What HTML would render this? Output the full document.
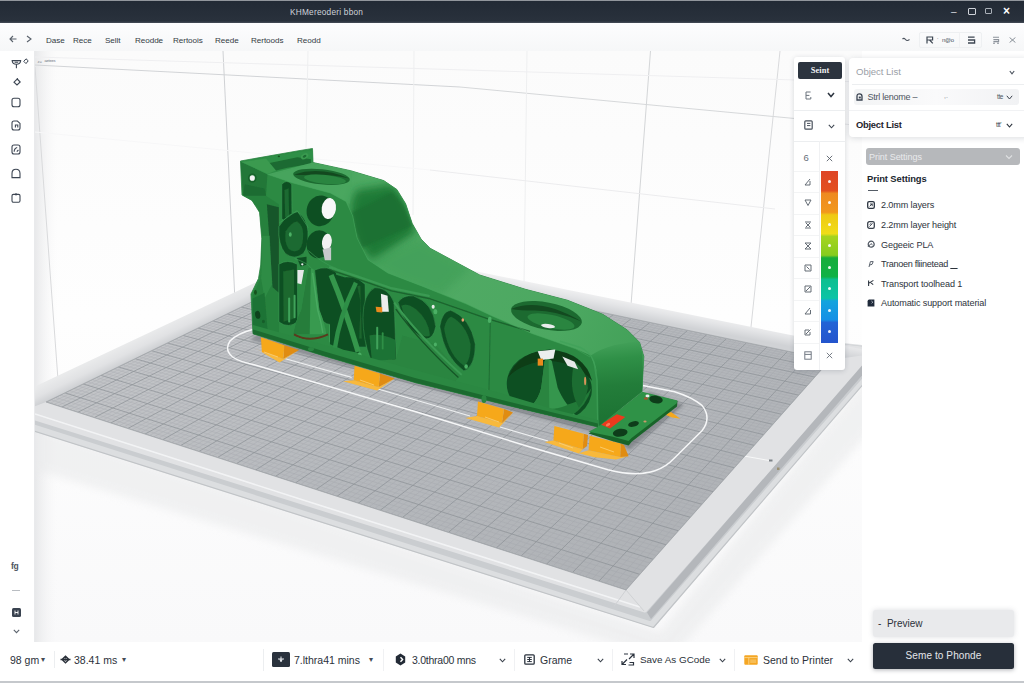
<!DOCTYPE html>
<html lang="en">
<head>
<meta charset="utf-8">
<title>Slicer</title>
<style>
*{box-sizing:border-box;margin:0;padding:0}
html,body{width:1024px;height:683px;overflow:hidden;background:#fff;font-family:"Liberation Sans",sans-serif;color:#2b313a}
.abs{position:absolute}
#title{left:0;top:0;width:1024px;height:23px;background:linear-gradient(#c9ccd0 0,#222a35 1.5px,#262e39 12px,#29313c 21px,#48505b 23px)}
#title .t{left:290px;top:7px;font-size:8.3px;color:#cfd3d9;letter-spacing:.22px;white-space:nowrap}
#title .w{top:6px;font-size:10px;color:#d5d9df}
#menu{left:0;top:23px;width:1024px;height:28px;background:linear-gradient(#fdfdfe,#f6f7f8);box-shadow:0 1px 3px rgba(0,0,0,.10)}
#menu span{position:absolute;top:12.5px;font-size:8.1px;color:#343b44;white-space:nowrap;letter-spacing:-.05px}
#left{left:0;top:51px;width:35px;height:591px;background:#fff;border-right:1px solid #e9eaec}
#view{left:35px;top:51px;width:827px;height:590.5px;overflow:hidden;background:#fdfdfd}
#view svg{position:absolute;left:-35px;top:-51px}
#right{left:862px;top:51px;width:162px;height:591px;background:#fff}
#bottom{left:0;top:641.5px;width:1024px;height:41.5px;background:#fff;border-bottom:2px solid #c5c8cc}
#bottom span{position:absolute;top:12px;font-size:10.5px;color:#2b313a;white-space:nowrap}
#bottom i{position:absolute;top:12px;font-size:8px;font-style:normal;color:#444b55}
.card{background:#fff;box-shadow:0 1px 5px rgba(40,50,60,.16);border-radius:3px}
</style>
</head>
<body>
<!-- title bar -->
<div id="title" class="abs">
  <div class="abs t">KHMereoderi bbon</div>
  <div class="abs w" style="left:951px">–</div>
  <div class="abs w" style="left:968px;top:8px;width:8px;height:7px;border:1px solid #cfd3d9;border-radius:1px"></div>
  <div class="abs w" style="left:985px;top:8px;width:7px;height:6px;border:1px solid #aab0b8;border-radius:1px"></div>
  <div class="abs w" style="left:1003px;top:4px;font-size:12px;font-weight:bold;color:#fff">×</div>
</div>
<!-- menu bar -->
<div id="menu" class="abs">
  <svg class="abs" style="left:9px;top:12px" width="8" height="8" viewBox="0 0 8 8"><path d="M7.5 4H1M4 1 1 4l3 3" fill="none" stroke="#59616b" stroke-width="1.1"/></svg>
  <svg class="abs" style="left:26px;top:12px" width="6" height="8" viewBox="0 0 6 8"><path d="M1 1 5 4 1 7" fill="none" stroke="#59616b" stroke-width="1.1"/></svg>
  <span style="left:46px">Dase</span>
  <span style="left:73px">Rece</span>
  <span style="left:105px">Sellt</span>
  <span style="left:135px">Reodde</span>
  <span style="left:173px">Rertoois</span>
  <span style="left:215px">Reede</span>
  <span style="left:251px">Rertoods</span>
  <span style="left:297px">Reodd</span>
  <svg class="abs" style="left:902px;top:14px" width="8" height="5" viewBox="0 0 8 5"><path d="M.5 2Q2 .5 3.5 2.5T7.5 2.5" fill="none" stroke="#4a525d" stroke-width="1.1"/></svg>
  <div class="abs" style="left:919px;top:8.5px;width:63px;height:16px;border:1px solid #eef0f2;border-radius:2px"></div>
  <div class="abs" style="left:959px;top:9px;width:1px;height:15px;background:#f0f1f3"></div>
  <svg class="abs" style="left:925.5px;top:13px" width="8" height="8" viewBox="0 0 8 8"><path d="M1 7.5V1h5.6v3H1M3.6 4 6.8 7.4" fill="none" stroke="#3d4652" stroke-width="1.2"/></svg>
  <span style="left:936.5px;top:12px;font-size:7px;color:#9aa0a8">·</span>
  <span style="left:942px;top:14px;font-size:6px;color:#4a525d;letter-spacing:-.3px">n@o</span>
  <svg class="abs" style="left:966.5px;top:13px" width="9" height="8" viewBox="0 0 9 8"><path d="M1 1.2h6.6M1 4h6.6v3H1.6M1 7h2" fill="none" stroke="#3d4652" stroke-width="1.3"/></svg>
  <svg class="abs" style="left:991.5px;top:13px" width="8" height="8" viewBox="0 0 8 8"><path d="M1 1.2h6M1.4 3.6h5.2v2H1.4M1 7.2h2M5 7.2h2" fill="none" stroke="#8c929b" stroke-width="1.1"/></svg>
  <svg class="abs" style="left:1008.5px;top:14px" width="7" height="6" viewBox="0 0 7 6"><path d="M.6 .5 6.4 5.5M6.4 .5 .6 5.5" fill="none" stroke="#7d848d" stroke-width=".9"/></svg>
</div>
<!-- left toolbar -->
<div id="left" class="abs">
<style>#left svg{position:absolute;fill:none;stroke:#3c4552;stroke-width:1.1}</style>
<svg style="left:10.5px;top:6.5px" width="18" height="12" viewBox="0 0 18 12"><path d="M.6 2.6h9.6M1.2 2.8Q1.4 6.2 5.4 6.2 9.4 6.2 9.6 2.8M3.6 4.2h3.6M5.4 6.2v4"/><path d="M15 .8 17.2 2.8 15 5.6 12.8 3.4Z" stroke-width="1"/></svg>
<svg style="left:12.5px;top:26.5px" width="8" height="8" viewBox="0 0 8 8"><path d="M4.2 1 7.2 4 4 7 1 4.2Z"/><path d="M4.6 .2 4.2 1.2"/></svg>
<svg style="left:11.3px;top:46px" width="10" height="11" viewBox="0 0 10 11"><rect x="1" y="1.2" width="8" height="8.6" rx="2"/></svg>
<svg style="left:11px;top:69px" width="10" height="11" viewBox="0 0 10 11"><path d="M1 3Q1 1 3 1H6.4L9 3.4V8Q9 10 7 10H3Q1 10 1 8Z"/><path d="M4.4 7.6V5h2.4v2.6"/></svg>
<svg style="left:11px;top:93px" width="10" height="11" viewBox="0 0 10 11"><path d="M1 3Q1 1 3 1H7Q9 1 9 3V8Q9 10 7 10H3Q1 10 1 8Z"/><path d="M3.2 7.8Q3 4.4 6.2 3.4M5.8 7.6 7.4 6"/></svg>
<svg style="left:11px;top:117px" width="10" height="11" viewBox="0 0 10 11"><path d="M1 9.6V5.4Q1 1.2 5 1.2 9 1.2 9 5.4V9.6Z"/></svg>
<svg style="left:11px;top:142px" width="10" height="10" viewBox="0 0 10 10"><rect x="1" y="1.4" width="8" height="7.8" rx="1.4"/><path d="M4 1.4h2" stroke-width="1.6"/></svg>
<div class="abs" style="left:11px;top:510px;font-size:8.5px;font-weight:bold;color:#4d555f;letter-spacing:-.4px">fg</div>
<div class="abs" style="left:12px;top:538.5px;width:8px;height:1px;background:#b9bdc2"></div>
<div class="abs" style="left:11.5px;top:556.5px;width:9px;height:9px;background:#3a4350;border-radius:1.5px"></div>
<svg style="left:13.5px;top:558.5px;stroke:#fff;stroke-width:.9" width="5" height="5" viewBox="0 0 5 5"><path d="M1 .5v4M4 .5v4M1 2.5h3"/></svg>
<svg style="left:12.5px;top:578px" width="7" height="5" viewBox="0 0 7 5"><path d="M.8 .8 3.5 3.6 6.2 .8" stroke="#5c646e"/></svg>

</div>
<!-- 3d viewport -->
<div id="view" class="abs">
<svg width="1024" height="683" viewBox="0 0 1024 683">
<defs>
<linearGradient id="bg" x1="0" y1="0" x2="0" y2="1"><stop offset="0" stop-color="#fbfbfb"/><stop offset=".45" stop-color="#fefefe"/><stop offset="1" stop-color="#f9f9fa"/></linearGradient>
<linearGradient id="bgl" x1="0" y1="0" x2="1" y2="0"><stop offset="0" stop-color="#e3e4e6" stop-opacity=".8"/><stop offset="1" stop-color="#f4f4f5" stop-opacity="0"/></linearGradient>
<linearGradient id="grid" gradientUnits="userSpaceOnUse" x1="340" y1="260" x2="500" y2="600"><stop offset="0" stop-color="#c3c5c8"/><stop offset=".5" stop-color="#b6b9bd"/><stop offset="1" stop-color="#b0b3b7"/></linearGradient>
<linearGradient id="top" gradientUnits="userSpaceOnUse" x1="300" y1="170" x2="640" y2="340"><stop offset="0" stop-color="#46a35c"/><stop offset=".2" stop-color="#4fab64"/><stop offset=".45" stop-color="#50aa64"/><stop offset=".8" stop-color="#4ca861"/><stop offset="1" stop-color="#43a159"/></linearGradient>
<linearGradient id="front" gradientUnits="userSpaceOnUse" x1="250" y1="200" x2="600" y2="420"><stop offset="0" stop-color="#237a3a"/><stop offset="1" stop-color="#2a8641"/></linearGradient>
<filter id="b05" x="-5%" y="-5%" width="110%" height="110%"><feGaussianBlur stdDeviation="0.45"/></filter>
<filter id="b1" x="-10%" y="-10%" width="120%" height="120%"><feGaussianBlur stdDeviation="0.7"/></filter>
<filter id="b2" x="-20%" y="-20%" width="140%" height="140%"><feGaussianBlur stdDeviation="1.6"/></filter>
<filter id="b4" x="-20%" y="-20%" width="140%" height="140%"><feGaussianBlur stdDeviation="4"/></filter>
<clipPath id="gridclip"><polygon points="46,402 342,258 830,360 626,590"/></clipPath>
</defs>
<rect x="35" y="51" width="827" height="592" fill="url(#bg)"/>
<rect x="35" y="51" width="22" height="592" fill="url(#bgl)"/>
<text x="37.5" y="62.5" font-family="Liberation Sans, sans-serif" font-size="4.2" fill="#8a9099">z=</text><text x="44.5" y="62.3" font-family="Liberation Sans, sans-serif" font-size="4" fill="#6a717b" letter-spacing="-.2">aetees</text>
<line x1="35" y1="65" x2="460" y2="87" stroke="#d2d4d7" stroke-width="1"/>
<line x1="460" y1="87" x2="800" y2="119" stroke="#d6d8da" stroke-width="1"/>
<line x1="800" y1="119" x2="862" y2="126" stroke="#e6e7e9" stroke-width="1"/>
<line x1="223" y1="51" x2="236" y2="322" stroke="#cfd1d4" stroke-width="1"/>
<line x1="35" y1="67" x2="60" y2="407" stroke="#d9dadc" stroke-width="1"/>
<line x1="650.5" y1="51" x2="630" y2="318" stroke="#d4d6d8" stroke-width="1"/>
<line x1="780" y1="51" x2="751" y2="327" stroke="#d9dadc" stroke-width="1"/>
<line x1="308" y1="51" x2="306" y2="150" stroke="#eeeff0" stroke-width="1"/>
<line x1="414" y1="51" x2="413" y2="215" stroke="#eeeff0" stroke-width="1"/>
<line x1="527" y1="51" x2="524" y2="285" stroke="#eeeff0" stroke-width="1"/>
<line x1="35" y1="132" x2="430" y2="170" stroke="#f7f7f8" stroke-width="1"/>
<line x1="430" y1="170" x2="775" y2="209" stroke="#ececee" stroke-width="1"/>
<line x1="35" y1="57" x2="862" y2="82" stroke="#efeff1" stroke-width="1"/>
<polygon points="35,424 660,632 880,360 880,420 670,660 35,470" fill="#e9eaeb" opacity=".6" filter="url(#b4)"/>
<polygon points="20,425 653,625.5 890,350 700,330 340,262 20,400" fill="#dcdee0" stroke="#dcdee0" stroke-width="4" stroke-linejoin="round"/>
<polyline points="20,426.5 653.5,627.5 891,352" fill="none" stroke="#c1c4c7" stroke-width="1.2" stroke-linejoin="round"/>
<polygon points="20,418.5 650,619.5 885,350 700,330 340,262 20,400" fill="#cacdd0" stroke="#cacdd0" stroke-width="3" stroke-linejoin="round"/>
<polygon points="20,413.6 645,610.5 874,350 700,330 342,260 20,400" fill="#e1e2e4" stroke="#e1e2e4" stroke-width="4" stroke-linejoin="round"/>
<polygon points="647,612.5 875.5,350 884,350 651,619" fill="#b4b7bb"/>
<linearGradient id="bk1" gradientUnits="userSpaceOnUse" x1="143" y1="336" x2="150.5" y2="351.5"><stop offset="0" stop-color="#e9eaeb"/><stop offset=".5" stop-color="#e1e2e4"/><stop offset="1" stop-color="#cdcfd2"/></linearGradient>
<linearGradient id="bk2" gradientUnits="userSpaceOnUse" x1="603" y1="295" x2="600" y2="311"><stop offset="0" stop-color="#f1f1f2"/><stop offset=".45" stop-color="#e4e5e7"/><stop offset="1" stop-color="#d0d2d5"/></linearGradient>
<polygon points="46,402 342,258 337,244 20,393.5 20,412" fill="url(#bk1)"/>
<polygon points="342,258 830,360 880,353 336,243" fill="url(#bk2)"/>
<polyline points="35,414 300,499 640,607" fill="none" stroke="#f4f5f6" stroke-width="1.6" opacity=".9"/>
<line x1="626" y1="590" x2="644" y2="611" stroke="#d0d2d4" stroke-width="1"/>
<line x1="626" y1="590" x2="614" y2="606.5" stroke="#cfd1d4" stroke-width="1"/>
<line x1="744" y1="456" x2="769" y2="460.5" stroke="#f7f8f8" stroke-width="1"/>
<rect x="769" y="459.5" width="3.5" height="2" fill="#7d8287"/><rect x="777" y="467.5" width="2.5" height="2.5" fill="#9a8f70"/>
<polygon points="46,402 342,258 830,360 626,590" fill="url(#grid)"/>
<g clip-path="url(#gridclip)" stroke="#8c9096" stroke-width=".8" opacity=".9" fill="none"><line x1="46.0" y1="402.0" x2="342.0" y2="258.0"/><line x1="61.8" y1="407.1" x2="356.2" y2="261.0"/><line x1="77.8" y1="412.3" x2="370.6" y2="264.0"/><line x1="94.2" y1="417.6" x2="385.2" y2="267.0"/><line x1="110.8" y1="423.0" x2="400.1" y2="270.1"/><line x1="127.8" y1="428.5" x2="415.1" y2="273.3"/><line x1="145.0" y1="434.1" x2="430.3" y2="276.5"/><line x1="162.6" y1="439.8" x2="445.8" y2="279.7"/><line x1="180.5" y1="445.6" x2="461.5" y2="283.0"/><line x1="198.8" y1="451.5" x2="477.4" y2="286.3"/><line x1="217.4" y1="457.6" x2="493.5" y2="289.7"/><line x1="236.4" y1="463.7" x2="509.9" y2="293.1"/><line x1="255.7" y1="470.0" x2="526.5" y2="296.6"/><line x1="275.4" y1="476.4" x2="543.3" y2="300.1"/><line x1="295.5" y1="482.9" x2="560.4" y2="303.7"/><line x1="316.0" y1="489.5" x2="577.8" y2="307.3"/><line x1="337.0" y1="496.3" x2="595.4" y2="311.0"/><line x1="358.3" y1="503.2" x2="613.3" y2="314.7"/><line x1="380.2" y1="510.3" x2="631.5" y2="318.5"/><line x1="402.4" y1="517.5" x2="650.0" y2="322.4"/><line x1="425.2" y1="524.9" x2="668.7" y2="326.3"/><line x1="448.4" y1="532.4" x2="687.8" y2="330.3"/><line x1="472.1" y1="540.1" x2="707.1" y2="334.3"/><line x1="496.3" y1="548.0" x2="726.8" y2="338.4"/><line x1="521.1" y1="556.0" x2="746.7" y2="342.6"/><line x1="546.5" y1="564.2" x2="767.1" y2="346.8"/><line x1="572.4" y1="572.6" x2="787.7" y2="351.2"/><line x1="598.9" y1="581.2" x2="808.7" y2="355.5"/><line x1="626.0" y1="590.0" x2="830.0" y2="360.0"/><line x1="46.0" y1="402.0" x2="626.0" y2="590.0"/><line x1="64.8" y1="392.8" x2="639.9" y2="574.4"/><line x1="83.1" y1="383.9" x2="653.2" y2="559.3"/><line x1="100.9" y1="375.3" x2="666.1" y2="544.8"/><line x1="118.2" y1="366.9" x2="678.5" y2="530.8"/><line x1="135.1" y1="358.7" x2="690.4" y2="517.3"/><line x1="151.4" y1="350.7" x2="702.0" y2="504.3"/><line x1="167.4" y1="343.0" x2="713.2" y2="491.7"/><line x1="182.9" y1="335.4" x2="723.9" y2="479.6"/><line x1="198.0" y1="328.0" x2="734.4" y2="467.8"/><line x1="212.8" y1="320.9" x2="744.5" y2="456.4"/><line x1="227.2" y1="313.9" x2="754.3" y2="445.4"/><line x1="241.2" y1="307.0" x2="763.7" y2="434.7"/><line x1="254.9" y1="300.4" x2="772.9" y2="424.4"/><line x1="268.2" y1="293.9" x2="781.8" y2="414.3"/><line x1="281.3" y1="287.6" x2="790.4" y2="404.6"/><line x1="294.0" y1="281.4" x2="798.8" y2="395.2"/><line x1="306.4" y1="275.3" x2="806.9" y2="386.0"/><line x1="318.5" y1="269.4" x2="814.9" y2="377.1"/><line x1="330.4" y1="263.6" x2="822.5" y2="368.4"/><line x1="342.0" y1="258.0" x2="830.0" y2="360.0"/></g>
<g clip-path="url(#gridclip)" stroke="#9ea2a8" stroke-width=".45" opacity=".65" fill="none"><line x1="49.9" y1="403.3" x2="345.5" y2="258.7"/><line x1="53.9" y1="404.5" x2="349.1" y2="259.5"/><line x1="57.8" y1="405.8" x2="352.6" y2="260.2"/><line x1="65.8" y1="408.4" x2="359.8" y2="261.7"/><line x1="69.8" y1="409.7" x2="363.4" y2="262.5"/><line x1="73.8" y1="411.0" x2="367.0" y2="263.2"/><line x1="81.9" y1="413.6" x2="374.3" y2="264.7"/><line x1="86.0" y1="415.0" x2="377.9" y2="265.5"/><line x1="90.1" y1="416.3" x2="381.6" y2="266.3"/><line x1="98.3" y1="419.0" x2="388.9" y2="267.8"/><line x1="102.5" y1="420.3" x2="392.6" y2="268.6"/><line x1="106.6" y1="421.7" x2="396.3" y2="269.4"/><line x1="115.0" y1="424.4" x2="403.8" y2="270.9"/><line x1="119.3" y1="425.7" x2="407.5" y2="271.7"/><line x1="123.5" y1="427.1" x2="411.3" y2="272.5"/><line x1="132.1" y1="429.9" x2="418.9" y2="274.1"/><line x1="136.4" y1="431.3" x2="422.7" y2="274.9"/><line x1="140.7" y1="432.7" x2="426.5" y2="275.7"/><line x1="149.4" y1="435.5" x2="434.2" y2="277.3"/><line x1="153.8" y1="436.9" x2="438.0" y2="278.1"/><line x1="158.2" y1="438.4" x2="441.9" y2="278.9"/><line x1="167.1" y1="441.2" x2="449.7" y2="280.5"/><line x1="171.5" y1="442.7" x2="453.6" y2="281.3"/><line x1="176.0" y1="444.1" x2="457.5" y2="282.1"/><line x1="185.1" y1="447.1" x2="465.4" y2="283.8"/><line x1="189.6" y1="448.6" x2="469.4" y2="284.6"/><line x1="194.2" y1="450.0" x2="473.4" y2="285.5"/><line x1="203.4" y1="453.0" x2="481.4" y2="287.1"/><line x1="208.1" y1="454.5" x2="485.4" y2="288.0"/><line x1="212.7" y1="456.0" x2="489.4" y2="288.8"/><line x1="222.1" y1="459.1" x2="497.6" y2="290.5"/><line x1="226.8" y1="460.6" x2="501.6" y2="291.4"/><line x1="231.6" y1="462.2" x2="505.7" y2="292.2"/><line x1="241.2" y1="465.3" x2="514.0" y2="293.9"/><line x1="246.0" y1="466.8" x2="518.1" y2="294.8"/><line x1="250.8" y1="468.4" x2="522.3" y2="295.7"/><line x1="260.6" y1="471.6" x2="530.7" y2="297.4"/><line x1="265.5" y1="473.2" x2="534.9" y2="298.3"/><line x1="270.5" y1="474.8" x2="539.1" y2="299.2"/><line x1="280.4" y1="478.0" x2="547.6" y2="301.0"/><line x1="285.4" y1="479.6" x2="551.8" y2="301.9"/><line x1="290.5" y1="481.2" x2="556.1" y2="302.8"/><line x1="300.6" y1="484.5" x2="564.7" y2="304.6"/><line x1="305.7" y1="486.2" x2="569.1" y2="305.5"/><line x1="310.9" y1="487.9" x2="573.4" y2="306.4"/><line x1="321.2" y1="491.2" x2="582.2" y2="308.2"/><line x1="326.5" y1="492.9" x2="586.6" y2="309.1"/><line x1="331.7" y1="494.6" x2="591.0" y2="310.0"/><line x1="342.3" y1="498.0" x2="599.9" y2="311.9"/><line x1="347.6" y1="499.8" x2="604.3" y2="312.8"/><line x1="353.0" y1="501.5" x2="608.8" y2="313.8"/><line x1="363.8" y1="505.0" x2="617.8" y2="315.7"/><line x1="369.2" y1="506.8" x2="622.4" y2="316.6"/><line x1="374.7" y1="508.5" x2="626.9" y2="317.6"/><line x1="385.7" y1="512.1" x2="636.1" y2="319.5"/><line x1="391.2" y1="513.9" x2="640.7" y2="320.4"/><line x1="396.8" y1="515.7" x2="645.3" y2="321.4"/><line x1="408.1" y1="519.4" x2="654.6" y2="323.3"/><line x1="413.7" y1="521.2" x2="659.3" y2="324.3"/><line x1="419.4" y1="523.0" x2="664.0" y2="325.3"/><line x1="430.9" y1="526.8" x2="673.4" y2="327.3"/><line x1="436.7" y1="528.6" x2="678.2" y2="328.3"/><line x1="442.5" y1="530.5" x2="683.0" y2="329.3"/><line x1="454.3" y1="534.3" x2="692.6" y2="331.3"/><line x1="460.2" y1="536.2" x2="697.4" y2="332.3"/><line x1="466.1" y1="538.2" x2="702.2" y2="333.3"/><line x1="478.1" y1="542.1" x2="712.0" y2="335.3"/><line x1="484.2" y1="544.0" x2="716.9" y2="336.4"/><line x1="490.2" y1="546.0" x2="721.8" y2="337.4"/><line x1="502.5" y1="550.0" x2="731.7" y2="339.5"/><line x1="508.7" y1="552.0" x2="736.7" y2="340.5"/><line x1="514.9" y1="554.0" x2="741.7" y2="341.5"/><line x1="527.4" y1="558.0" x2="751.8" y2="343.7"/><line x1="533.7" y1="560.1" x2="756.9" y2="344.7"/><line x1="540.1" y1="562.1" x2="761.9" y2="345.8"/><line x1="552.9" y1="566.3" x2="772.2" y2="347.9"/><line x1="559.3" y1="568.4" x2="777.3" y2="349.0"/><line x1="565.8" y1="570.5" x2="782.5" y2="350.1"/><line x1="578.9" y1="574.7" x2="792.9" y2="352.2"/><line x1="585.6" y1="576.9" x2="798.1" y2="353.3"/><line x1="592.2" y1="579.0" x2="803.4" y2="354.4"/><line x1="605.6" y1="583.4" x2="814.0" y2="356.6"/><line x1="612.4" y1="585.6" x2="819.3" y2="357.8"/><line x1="619.2" y1="587.8" x2="824.6" y2="358.9"/><line x1="50.8" y1="399.7" x2="629.5" y2="586.0"/><line x1="55.5" y1="397.4" x2="633.0" y2="582.1"/><line x1="60.2" y1="395.1" x2="636.4" y2="578.2"/><line x1="69.5" y1="390.6" x2="643.2" y2="570.6"/><line x1="74.0" y1="388.4" x2="646.6" y2="566.8"/><line x1="78.6" y1="386.1" x2="649.9" y2="563.0"/><line x1="87.6" y1="381.8" x2="656.5" y2="555.6"/><line x1="92.1" y1="379.6" x2="659.7" y2="552.0"/><line x1="96.5" y1="377.4" x2="662.9" y2="548.4"/><line x1="105.3" y1="373.2" x2="669.2" y2="541.3"/><line x1="109.6" y1="371.0" x2="672.3" y2="537.8"/><line x1="113.9" y1="368.9" x2="675.4" y2="534.3"/><line x1="122.5" y1="364.8" x2="681.5" y2="527.4"/><line x1="126.7" y1="362.7" x2="684.5" y2="524.0"/><line x1="130.9" y1="360.7" x2="687.5" y2="520.7"/><line x1="139.2" y1="356.7" x2="693.4" y2="514.0"/><line x1="143.3" y1="354.7" x2="696.3" y2="510.8"/><line x1="147.4" y1="352.7" x2="699.1" y2="507.5"/><line x1="155.5" y1="348.8" x2="704.8" y2="501.1"/><line x1="159.5" y1="346.8" x2="707.6" y2="498.0"/><line x1="163.4" y1="344.9" x2="710.4" y2="494.8"/><line x1="171.3" y1="341.0" x2="715.9" y2="488.7"/><line x1="175.2" y1="339.1" x2="718.6" y2="485.6"/><line x1="179.1" y1="337.3" x2="721.3" y2="482.6"/><line x1="186.7" y1="333.5" x2="726.6" y2="476.6"/><line x1="190.5" y1="331.7" x2="729.2" y2="473.6"/><line x1="194.3" y1="329.9" x2="731.8" y2="470.7"/><line x1="201.8" y1="326.2" x2="736.9" y2="464.9"/><line x1="205.5" y1="324.4" x2="739.5" y2="462.1"/><line x1="209.1" y1="322.6" x2="742.0" y2="459.2"/><line x1="216.4" y1="319.1" x2="746.9" y2="453.6"/><line x1="220.0" y1="317.3" x2="749.4" y2="450.9"/><line x1="223.6" y1="315.6" x2="751.8" y2="448.1"/><line x1="230.7" y1="312.1" x2="756.6" y2="442.7"/><line x1="234.2" y1="310.4" x2="759.0" y2="440.0"/><line x1="237.7" y1="308.7" x2="761.4" y2="437.4"/><line x1="244.6" y1="305.4" x2="766.0" y2="432.1"/><line x1="248.1" y1="303.7" x2="768.3" y2="429.5"/><line x1="251.5" y1="302.0" x2="770.6" y2="426.9"/><line x1="258.2" y1="298.7" x2="775.1" y2="421.8"/><line x1="261.6" y1="297.1" x2="777.4" y2="419.3"/><line x1="264.9" y1="295.5" x2="779.6" y2="416.8"/><line x1="271.5" y1="292.3" x2="784.0" y2="411.9"/><line x1="274.8" y1="290.7" x2="786.1" y2="409.4"/><line x1="278.0" y1="289.1" x2="788.3" y2="407.0"/><line x1="284.5" y1="286.0" x2="792.6" y2="402.2"/><line x1="287.7" y1="284.4" x2="794.7" y2="399.9"/><line x1="290.8" y1="282.9" x2="796.7" y2="397.5"/><line x1="297.1" y1="279.8" x2="800.9" y2="392.8"/><line x1="300.2" y1="278.3" x2="802.9" y2="390.5"/><line x1="303.3" y1="276.8" x2="804.9" y2="388.3"/><line x1="309.5" y1="273.8" x2="808.9" y2="383.7"/><line x1="312.5" y1="272.3" x2="810.9" y2="381.5"/><line x1="315.5" y1="270.9" x2="812.9" y2="379.3"/><line x1="321.5" y1="268.0" x2="816.8" y2="374.9"/><line x1="324.5" y1="266.5" x2="818.7" y2="372.7"/><line x1="327.5" y1="265.1" x2="820.6" y2="370.6"/><line x1="333.3" y1="262.2" x2="824.4" y2="366.3"/><line x1="336.2" y1="260.8" x2="826.3" y2="364.2"/><line x1="339.1" y1="259.4" x2="828.2" y2="362.1"/></g>
<polygon points="46,402 342,258 830,360 626,590" fill="none" stroke="#a6a9ad" stroke-width=".8"/>
<path d="M253,329.5 Q238,333 230,341 Q224,350 232.6,357 Q240,362 254,364.7 L415,411.5 L530,447 L608,469.8 Q636,477 655,470.8 Q666,467 674.5,458 L702,430.8 Q712,418 702,405.4 Q692,397 674.5,391.7 L643,385.5" fill="none" stroke="#f6f7f8" stroke-width="1.5" stroke-linejoin="round"/>
<path d="M285.3,358.8 L351.7,377.4 M378,389 L470,416 M500,427 L548,441" fill="none" stroke="#eef0f1" stroke-width="1.1"/>
<polygon points="250,340 600,434 630,450 684,405 650,392 600,420 262,330" fill="#60656a" opacity=".5" filter="url(#b2)"/>
<polygon points="249.2,344.8 261.9,352 283.4,358.8 299,350 279.5,362.6" fill="#f8b93c" />
<polygon points="284.3,345.2 299,350 283.4,358.8" fill="#e08c12" />
<polygon points="260.9,337.3 284.3,345.2 283.4,358.8 261.9,352" fill="#f6a81a" />
<polygon points="343,381.3 353.7,380.3 378.7,387.1 394.7,378.4 377.1,390.4" fill="#f8b93c" />
<polygon points="380,373.5 394.7,378.4 378.7,387.1" fill="#e08c12" />
<polygon points="354.6,365.7 380,373.5 378.7,387.1 353.7,380.3" fill="#f6a81a" />
<polygon points="465.5,418 477,416 502,423 513,413 499,427.5" fill="#f8b93c" />
<polygon points="504,409 513,412.5 502,423" fill="#e08c12" />
<polygon points="478,401.5 504,409 502,423 477,416" fill="#f6a81a" />
<polygon points="544.6,442.1 553.4,440.5 582.7,449.3 578.8,453.4" fill="#f8b93c" />
<polygon points="583.7,433.7 588,435 587,446 582.7,449.3" fill="#e08c12" />
<polygon points="554.4,425.9 583.7,433.7 582.7,449.3 553.4,440.5" fill="#f6a81a" />
<polygon points="578.8,453.2 588.6,450.3 620.2,457.1 628.6,456.2 616,459.4 594.5,457.3" fill="#f8b93c" />
<polygon points="620.8,443.5 624,445 628.6,456.2 620.2,457.1" fill="#e08c12" />
<polygon points="589.6,435.7 620.8,443.5 620.2,457.1 588.6,450.3" fill="#f6a81a" />
<polygon points="664.8,414.5 671,412 680.4,418.8 672,417.5" fill="#f4a81e" />
<line x1="264" y1="352" x2="278" y2="357" stroke="#fbd27a" stroke-width=".8"/>
<line x1="360" y1="380" x2="374" y2="385" stroke="#fbd27a" stroke-width=".8"/>
<line x1="485" y1="417" x2="499" y2="422" stroke="#fbd27a" stroke-width=".8"/>
<line x1="559" y1="443" x2="573" y2="448" stroke="#fbd27a" stroke-width=".8"/>
<line x1="600" y1="447" x2="614" y2="452" stroke="#fbd27a" stroke-width=".8"/>
<polygon points="588.6,433.5 597.4,428 642.3,392.5 677.5,401 677,406.5 632,441.5 628.6,445.5 612,441" fill="#186429" />
<polygon points="588.6,431.8 597.4,426.9 642.3,391.7 677.5,400.5 676.5,403.5 631.6,438 628.6,441 612,436.6" fill="#2f9247" />
<ellipse cx="656" cy="399.5" rx="6.8" ry="3.9" fill="#0e3d1a" transform="rotate(8 656 399.5)" />
<ellipse cx="633.5" cy="424" rx="5.5" ry="2.7" fill="#0e3d1a" transform="rotate(-14 633.5 424)" />
<ellipse cx="620.2" cy="432.7" rx="7.4" ry="3.9" fill="#0e3d1a" transform="rotate(-8 620.2 432.7)" />
<ellipse cx="647.5" cy="396" rx="2" ry="1.4" fill="#ecefef" transform="rotate(0 647.5 396)" />
<ellipse cx="646" cy="398.5" rx="2.2" ry="1.2" fill="#9a5a30" transform="rotate(0 646 398.5)" />
<ellipse cx="645" cy="421.5" rx="1.6" ry="1" fill="#c99a6a" transform="rotate(0 645 421.5)" />
<polygon points="600.7,424.5 616.9,414.2 625.3,417.1 610,428.4" fill="#ea3a1d" />
<ellipse cx="608" cy="424.6" rx="2.4" ry="1.4" fill="#f77a55" transform="rotate(-30 608 424.6)" />
<polygon points="240.5,161 300,150.5 312.5,148.5 313,162.5 350.7,170.7 383.7,180.6 396.8,189.4 405.6,203.7 412.2,223.4 421,239 430,248.2 479.7,275 525.4,289.3 567.6,300.3 602.7,314.3 627.3,330 639.6,342.4 643.8,356.5 642.5,380 642,391.5 622,407 597.9,427 500,403.5 415,382.5 324.4,356 253,333.8 251,294 258.5,278.5 260.7,265 261.8,238.8 259.6,212.4 252,200.4 242,195" fill="#2c8a43" stroke="#2a8340" stroke-width=".8" stroke-linejoin="round"/>
<clipPath id="silclip"><polygon points="240.5,161 300,150.5 312.5,148.5 313,162.5 350.7,170.7 383.7,180.6 396.8,189.4 405.6,203.7 412.2,223.4 421,239 430,248.2 479.7,275 525.4,289.3 567.6,300.3 602.7,314.3 627.3,330 639.6,342.4 643.8,356.5 642.5,380 642,391.5 622,407 597.9,427 500,403.5 415,382.5 324.4,356 253,333.8 251,294 258.5,278.5 260.7,265 261.8,238.8 259.6,212.4 252,200.4 242,195"/></clipPath>
<g clip-path="url(#silclip)" filter="url(#b05)"><g transform="translate(236 150) scale(0.285714)">
<polygon points="25,160 105,160 150,190 150,650 58,645 58,510 85,450 90,300 75,200" fill="#27813d" />
<polygon points="108,190 150,200 150,500 128,480 116,300" fill="#15572a" filter="url(#b2)"/>
<polygon points="92,300 118,300 126,470 100,520 88,450" fill="#329149" opacity=".7" filter="url(#b2)"/>
<polygon points="58,520 100,500 112,645 58,645" fill="#1f7335" filter="url(#b2)"/>
<ellipse cx="76" cy="577" rx="9" ry="14" fill="#0d421b" transform="rotate(-10 76 577)" />
<ellipse cx="68" cy="498" rx="5" ry="9" fill="#14531f" transform="rotate(0 68 498)" />
<ellipse cx="96" cy="600" rx="5" ry="6" fill="#175d29" transform="rotate(0 96 600)" />
<polygon points="15,40 110,85 105,160 25,160" fill="#227738" />
<polygon points="30,120 100,135 105,160 25,160" fill="#1b6a30" opacity=".8" filter="url(#b2)"/>
<ellipse cx="57" cy="98" rx="9" ry="10" fill="#f3f4f5" transform="rotate(0 57 98)" />
<ellipse cx="57" cy="98" rx="13" ry="14" fill="none" transform="rotate(0 57 98)" stroke="#185f2a" stroke-width="4"/>
<polygon points="15,40 215,8 270,3 270,45 110,85" fill="#2f8f46" />
<polygon points="105,48 215,25 262,32 262,48 180,62 140,72" fill="#1c6a30" />
<polygon points="20,42 105,30 140,72 110,84" fill="#3a9a50" />
<ellipse cx="240" cy="22" rx="14" ry="9" fill="#3a9a50" transform="rotate(-30 240 22)" />
<ellipse cx="240" cy="22" rx="7" ry="4" fill="#1c6a30" transform="rotate(-30 240 22)" />
<ellipse cx="150" cy="22" rx="4" ry="3" fill="#14561f" transform="rotate(0 150 22)" />
<path d="M160,120 Q178,100 195,120 L196,240 Q178,262 160,240 Z" fill="#115024"  stroke="#3d9f57" stroke-opacity=".55" stroke-width="3.5"/>
<path d="M170,140 L184,135 L186,235 L172,235Z" fill="#1b6a30" />
<path d="M150,268 Q180,222 215,216 Q250,240 252,285 Q254,340 236,362 Q205,388 172,362 Q146,330 150,268Z" fill="#115024"  stroke="#3d9f57" stroke-opacity=".55" stroke-width="3.5"/>
<path d="M174,284 Q195,252 214,250 Q234,264 235,292 Q236,332 222,348 Q200,362 184,346 Q168,322 174,284Z" fill="#1b6a30" />
<ellipse cx="190" cy="296" rx="5" ry="8" fill="#4bb065" transform="rotate(0 190 296)" />
<ellipse cx="295" cy="213" rx="48" ry="54" fill="#115024" transform="rotate(8 295 213)" />
<ellipse cx="325" cy="205" rx="25" ry="37" fill="#f7f8f8" transform="rotate(8 325 205)" />
<ellipse cx="290" cy="330" rx="43" ry="49" fill="#115024" transform="rotate(8 290 330)" />
<ellipse cx="318" cy="322" rx="17" ry="29" fill="#f1f2f2" transform="rotate(8 318 322)" />
<polygon points="303,348 333,340 333,386 311,386" fill="#c6c9cb" />
<polygon points="213,378 247,374 247,402 226,408" fill="#115024" />
<ellipse cx="232" cy="400" rx="4" ry="4" fill="#e9ecec" transform="rotate(0 232 400)" />
<path d="M150,400 Q180,380 215,400 L216,600 Q185,628 150,602 Z" fill="#115024"  stroke="#3d9f57" stroke-opacity=".55" stroke-width="3.5"/>
<polygon points="165,425 203,418 204,590 167,600" fill="#1b672e" />
<polygon points="215,420 238,420 229,470 215,466" fill="#e6e9e9" />
<path d="M275,420 Q320,400 352,430 L352,600 Q330,622 305,600 L290,560 Z" fill="#115024"  stroke="#3d9f57" stroke-opacity=".55" stroke-width="3.5"/>
<path d="M365,450 Q410,430 452,470 L456,690 L380,690 Q360,560 365,450 Z" fill="#115024"  stroke="#3d9f57" stroke-opacity=".55" stroke-width="3.5"/>
<polygon points="385,480 435,475 440,660 395,660" fill="#1a652d" />
<path d="M252,415 Q262,409 272,418 L292,560 Q312,610 316,645 L200,645 Q208,600 228,560 Z" fill="#379a50" />
<path d="M252,415 Q257,411 262,413 L258,645 L200,645 Q208,600 228,560 Z" fill="#257d3b" />
<path d="M268,430 L286,560 Q298,600 304,640" fill="none" stroke="#55b56d" stroke-width="5" opacity=".6"/>
<path d="M203,645 Q255,676 322,645" fill="none" stroke="#5a3a1e" stroke-width="7"/>
<line x1="186" y1="520" x2="186" y2="600" stroke="#3fa35a" stroke-width="7" stroke-linecap="round"/>
<line x1="205" y1="510" x2="205" y2="585" stroke="#3fa35a" stroke-width="7" stroke-linecap="round"/>
<line x1="330" y1="615" x2="330" y2="670" stroke="#3fa35a" stroke-width="7" stroke-linecap="round"/>
<line x1="352" y1="625" x2="352" y2="683" stroke="#3fa35a" stroke-width="7" stroke-linecap="round"/>
<path d="M152,255 L214,212 L253,272" fill="none" stroke="#3c9e56" stroke-width="3" opacity=".8"/>
<path d="M205,380 Q250,395 262,412" fill="none" stroke="#3c9e56" stroke-width="3" opacity=".8"/>
<path d="M253,352 Q300,395 352,415" fill="none" stroke="#3c9e56" stroke-width="3" opacity=".7"/>
</g></g>
<polygon points="267.4,174.3 313,162.5 350.7,170.7 383.7,180.6 396.8,189.4 405.6,203.7 412.2,223.4 421,239 430,248.2 479.7,275 525.4,289.3 567.6,300.3 602.7,314.3 627.3,330 639.6,342.4 643.8,356.5 643,372 642,391.5 597.9,427 596.9,372 590.7,355.6 575.6,348.8 531.7,333.4 492,315.9 465.9,303.8 423,286.5 387.8,273 368,259.8 357,237.8 352.7,215.9 346,201.5 330.3,193 293,183" fill="url(#top)" />
<clipPath id="topclip"><polygon points="267.4,174.3 313,162.5 350.7,170.7 383.7,180.6 396.8,189.4 405.6,203.7 412.2,223.4 421,239 430,248.2 479.7,275 525.4,289.3 567.6,300.3 602.7,314.3 627.3,330 639.6,342.4 643.8,356.5 643,372 642,391.5 597.9,427 596.9,372 590.7,355.6 575.6,348.8 531.7,333.4 492,315.9 465.9,303.8 423,286.5 387.8,273 368,259.8 357,237.8 352.7,215.9 346,201.5 330.3,193 293,183"/></clipPath>
<g clip-path="url(#topclip)">
<path d="M350,206 L356,190 L392,184 L402,196 L410,216 L416,232 L372,262 L360,246 L354,226 Z" fill="#1f7836" opacity=".95" filter="url(#b4)"/>
<path d="M352,212 L392,192 L404,206 L412,226 L362,248 L355,230 Z" fill="#1a6f31" opacity=".8" filter="url(#b2)"/>
<path d="M366,262 L420,238 L470,268 L440,296 L400,282 Z" fill="#3c9c55" opacity=".6" filter="url(#b4)"/>
<path d="M267,176 L313,164 L352,172 L350,204 L330,194 L293,184Z" fill="#48a65e" opacity=".5"/>
</g>
<linearGradient id="endf" gradientUnits="userSpaceOnUse" x1="615" y1="340" x2="622" y2="415"><stop offset="0" stop-color="#46a35c"/><stop offset=".25" stop-color="#2f9047"/><stop offset=".6" stop-color="#237d3a"/><stop offset="1" stop-color="#1d7434"/></linearGradient>
<path d="M590.7,355.6 Q600,349 615,345 Q630,342 638.9,341.2 L642.4,353.5 L643,372 L642,391.5 L597.9,427 L596.9,372 Q595,362 590.7,355.6Z" fill="url(#endf)" />
<path d="M560,341.2 L580.5,347.4 Q590,352 594,362 L597,380 L597.9,427" fill="none" stroke="#3fa159" stroke-width="1.6" opacity=".7"/>
<ellipse cx="321.5" cy="176.8" rx="28.5" ry="7.6" fill="#1c6a30" transform="rotate(6 321.5 176.8)" />
<path d="M294,174.5 Q320,166 349.5,178.5 Q330,174 312,174.5 Q300,175.5 294,174.5Z" fill="#13491f" />
<ellipse cx="325" cy="179.4" rx="21" ry="4.4" fill="#2a8540" transform="rotate(6 325 179.4)" />
<ellipse cx="546.5" cy="316" rx="36" ry="13.6" fill="#1c6a30" transform="rotate(11 546.5 316)" />
<path d="M511,309 Q540,297 581.5,321.5 Q556,310.5 535,310.5 Q520,310.5 511,309Z" fill="#134a20" />
<ellipse cx="551" cy="321.5" rx="24" ry="6.6" fill="#2a8540" transform="rotate(12 551 321.5)" />
<ellipse cx="548" cy="326" rx="7" ry="2" fill="#e9ecec" transform="rotate(8 548 326)" />
<g clip-path="url(#silclip)" filter="url(#b05)"><g transform="translate(330 230) scale(0.219539)">
<path d="M0,170 L120,210 L280,265 L450,300" fill="none" stroke="#3a9a52" stroke-width="10" stroke-linecap="round"/>
<path d="M0,182 L120,222 L280,277 L450,312 L720,405 L911,462" fill="none" stroke="#175d29" stroke-width="6" opacity=".85"/>
<polygon points="0,195 120,232 140,330 130,560 60,545 0,520" fill="#115024" />
<path d="M5,205 Q70,360 128,555" fill="none" stroke="#34964c" stroke-width="24"/>
<path d="M118,240 Q40,400 22,540" fill="none" stroke="#2f8f46" stroke-width="20"/>
<path d="M150,400 Q150,290 205,262 Q265,262 292,330 L302,590 Q240,612 185,590 Q150,500 150,400Z" fill="#115024"  stroke="#3d9f57" stroke-opacity=".55" stroke-width="3.5"/>
<path d="M180,480 Q230,470 296,500 L300,588 Q240,606 190,586Z" fill="#1f7335" />
<polygon points="232,290 262,300 268,372 236,372" fill="#eceeee" />
<polygon points="208,350 238,352 238,376 212,373" fill="#e98a1f" />
<line x1="215" y1="445" x2="215" y2="540" stroke="#3fa35a" stroke-width="9" stroke-linecap="round"/>
<line x1="240" y1="470" x2="240" y2="540" stroke="#2f8f46" stroke-width="8" stroke-linecap="round"/>
<path d="M310,330 Q330,295 380,300 Q470,330 482,440 Q470,502 430,496 Q340,450 310,330Z" fill="#115024"  stroke="#3d9f57" stroke-opacity=".55" stroke-width="3.5"/>
<path d="M325,345 Q350,330 390,360 Q450,410 455,480 Q440,488 425,480 Q350,440 325,345Z" fill="#1d6d31" filter="url(#b1)"/>
<ellipse cx="470" cy="350" rx="7" ry="9" fill="#e8ecea" transform="rotate(0 470 350)" />
<ellipse cx="480" cy="372" rx="9" ry="12" fill="#4bb065" transform="rotate(0 480 372)" />
<path d="M500,440 Q510,370 550,365 Q640,400 662,520 Q662,622 610,642 Q520,580 500,440Z" fill="#115024"  stroke="#3d9f57" stroke-opacity=".55" stroke-width="3.5"/>
<path d="M520,450 Q530,400 552,395 Q620,430 640,520 Q640,600 610,618 Q540,570 520,450Z" fill="#1d6d31" filter="url(#b1)"/>
<ellipse cx="605" cy="410" rx="6" ry="8" fill="#e9a070" transform="rotate(0 605 410)" />
<polygon points="190,596 300,590 330,480 480,520 600,660 560,700 200,700" fill="#2a8540" />
<path d="M292,330 Q400,480 600,660" fill="none" stroke="#3a9a52" stroke-width="9"/>
<path d="M300,360 Q400,500 585,672" fill="none" stroke="#114a20" stroke-width="6" opacity=".8"/>
<ellipse cx="728" cy="405" rx="8" ry="10.4" fill="#4bb065" transform="rotate(0 728 405)" />
<ellipse cx="135" cy="570" rx="9" ry="11.7" fill="#4bb065" transform="rotate(0 135 570)" />
<ellipse cx="620" cy="622" rx="8" ry="10.4" fill="#4bb065" transform="rotate(0 620 622)" />
<ellipse cx="480" cy="522" rx="7" ry="9.1" fill="#4bb065" transform="rotate(0 480 522)" />
</g></g>
<g clip-path="url(#silclip)" filter="url(#b05)"><g transform="translate(420 230) scale(0.35137)">
<ellipse cx="368" cy="446" rx="122" ry="99" fill="#115024" transform="rotate(12 368 446)" />
<path d="M250,420 Q280,345 370,340 Q470,350 490,430 Q450,380 370,372 Q290,376 250,420Z" fill="#0c3c18" />
<path d="M285,500 Q340,540 430,530 Q475,500 488,450 Q460,495 400,500 Q330,505 285,500Z" fill="#237a38" />
<path d="M440,375 Q475,400 478,450 Q470,490 452,505 Q420,450 440,375Z" fill="#1d6d31" />
<path d="M355,372 Q365,362 375,372 L392,450 Q405,480 420,498 Q370,520 318,500 Q338,480 345,450Z" fill="#35964d" />
<path d="M355,372 Q361,364 366,368 L368,512 Q340,512 318,500 Q338,480 345,450Z" fill="#2a8540" />
<polygon points="335,345 385,340 380,366 345,370" fill="#eceeee" />
<polygon points="405,360 440,375 450,396 420,386" fill="#e6e9e8" />
<polygon points="335,366 350,366 350,386 335,386" fill="#e98a1f" />
<ellipse cx="470" cy="430" rx="3" ry="12" fill="#d9945a" transform="rotate(0 470 430)" />
<line x1="200" y1="262" x2="196" y2="470" stroke="#1f7034" stroke-width="3"/>
<ellipse cx="198" cy="258" rx="5" ry="7" fill="#4bb065" transform="rotate(0 198 258)" />
<ellipse cx="192" cy="462" rx="5" ry="7" fill="#4bb065" transform="rotate(0 192 462)" />
<ellipse cx="436" cy="530" rx="5" ry="7" fill="#4bb065" transform="rotate(0 436 530)" />
<ellipse cx="300" cy="520" rx="5" ry="7" fill="#4bb065" transform="rotate(0 300 520)" />
</g></g>
<path d="M267.4,174.3 L293,183 L330.3,193 L346,201.5 L352.7,215.9 L357,237.8 L368,259.8 L387.8,273 L423,286.5 L465.9,303.8 L492,315.9 L531.7,333.4 L575.6,348.8 L590,357" fill="none" stroke="#45a75e" stroke-width="1" opacity=".5"/>
<path d="M253,333.8 L324.4,356 L415,382.5 L500,403.5 L597.9,427 L597.9,420 L560,411 L500,393 L415,370 L324.4,345 L253,325Z" fill="#2b8842" />
<path d="M253,333.8 L324.4,356 L415,382.5 L500,403.5 L597.9,427 L597.9,423.5 L500,399.5 L415,378 L324.4,351.5 L253,329.5Z" fill="#1b6a2f" />
<ellipse cx="311" cy="349" rx="3" ry="2" fill="#2a8540" transform="rotate(0 311 349)" />
<ellipse cx="484" cy="399" rx="2.5" ry="4" fill="#2a8540" transform="rotate(0 484 399)" />
</svg>
</div>
<!-- right panel -->
<div id="right" class="abs">
<style>
#right .it{position:absolute;left:19px;font-size:9.1px;color:#2d333b;white-space:nowrap;letter-spacing:-.12px}
#right .ic{position:absolute;left:5px;width:8px;height:8px}
#ocard{left:849px;top:58px;width:180px;height:79px;background:#fff;border-radius:4px;box-shadow:0 1px 6px rgba(50,60,75,.18)}
</style>
<div class="abs" style="left:4px;top:97px;width:154px;height:17px;background:#b6b8bb;border-radius:3px"></div>
<div class="abs" style="left:7px;top:101px;font-size:9px;color:#e9eaec;letter-spacing:-.05px">Print Settings</div>
<svg class="abs" style="left:143px;top:103px" width="8" height="6" viewBox="0 0 8 6"><path d="M1 1.5 4 4.5 7 1.5" fill="none" stroke="#dfe0e2" stroke-width="1.1"/></svg>
<div class="abs" style="left:5px;top:122px;font-size:9.4px;font-weight:bold;color:#20262e;letter-spacing:-.1px">Print Settings</div>
<div class="abs" style="left:6px;top:139px;width:10px;height:1px;background:#555c66"></div>
<svg class="ic" style="top:150.3px" viewBox="0 0 8 8"><rect x=".7" y=".7" width="6.6" height="6.6" rx="1.4" fill="none" stroke="#2b3440" stroke-width="1.3"/><path d="M2.6 5.4 5.4 2.6M3 3h2.2v2.2" stroke="#2b3440" stroke-width=".9" fill="none"/></svg>
<div class="it" style="top:149px">2.0mm layers</div>
<svg class="ic" style="top:170.3px" viewBox="0 0 8 8"><rect x=".7" y=".7" width="6.6" height="6.6" rx="1.6" fill="none" stroke="#3a424d" stroke-width="1.3"/><path d="M2.4 5.6 5.6 2.4M2.6 3.4 4.4 2.4" stroke="#3a424d" stroke-width=".9" fill="none"/></svg>
<div class="it" style="top:169px">2.2mm layer height</div>
<svg class="ic" style="top:189.3px" viewBox="0 0 8 8"><circle cx="4.2" cy="4.2" r="3" fill="none" stroke="#4a525d" stroke-width="1.2"/><path d="M1 6.8 4 3.6 5.6 5" stroke="#4a525d" stroke-width="1" fill="none"/></svg>
<div class="it" style="top:188.5px">Gegeeic PLA</div>
<svg class="ic" style="top:209.3px" viewBox="0 0 8 8"><path d="M2 7 3.4 1.6h2.8L5 4.4 2.6 5" stroke="#5a626c" stroke-width="1" fill="none"/></svg>
<div class="it" style="top:208px;letter-spacing:-.3px">Tranoen fliinetead <span style="text-decoration:underline">&nbsp;_</span></div>
<svg class="ic" style="top:228.3px" viewBox="0 0 8 8"><path d="M1.6 7V1.6M1.6 4.4 6.4 1.4M3.4 3.4 6.2 5.6" stroke="#2f3742" stroke-width="1.1" fill="none"/></svg>
<div class="it" style="top:227.5px">Transport toolhead 1</div>
<svg class="ic" style="top:248.3px" viewBox="0 0 8 8"><path d="M.6 2.2Q.6.6 2.2.6H7.4V7.4H.6Z" fill="#1f2a3a"/><path d="M4.4 2 5.8 3.2 4.6 4.4" stroke="#cfd6e0" stroke-width=".8" fill="none"/></svg>
<div class="it" style="top:247px">Automatic support material</div>
<!-- preview + send -->
<div class="abs" style="left:11px;top:559px;width:141px;height:27px;background:#e9eaec;border-radius:3px;box-shadow:0 0 5px rgba(120,125,135,.25)"></div>
<div class="abs" style="left:16px;top:566.5px;font-size:10px;color:#2b313a">-&nbsp; Preview</div>

</div>
<div id="ocard" class="abs">
  <div class="abs" style="left:7px;top:7.5px;font-size:9.6px;color:#9ba0a7;letter-spacing:-.05px">Object List</div>
  <svg class="abs" style="left:159.5px;top:11.5px" width="6" height="5" viewBox="0 0 6 5"><path d="M.8 1 3 3.8 5.2 1" fill="none" stroke="#4a525d" stroke-width="1.1"/></svg>
  <div class="abs" style="left:3px;top:26px;width:172px;height:1px;background:#eceef0"></div>
  <div class="abs" style="left:4.5px;top:31px;width:165px;height:15.5px;background:linear-gradient(90deg,#f3f4f5,#fafafb 50%,#f1f2f4);border-radius:3px"></div>
  <svg class="abs" style="left:7px;top:34.5px" width="7" height="8" viewBox="0 0 7 8"><path d="M1 3.2Q1 .8 3.5.8 6 .8 6 3.2V7H1Z" fill="none" stroke="#394250" stroke-width="1.3"/><path d="M2.8 3.6h2v1.8h-2z" fill="#394250"/></svg>
  <div class="abs" style="left:18.5px;top:33.5px;font-size:9px;color:#4d545e;letter-spacing:-.25px;white-space:nowrap">Strl lenome –</div>
  <div class="abs" style="left:95px;top:34px;font-size:7px;color:#8a9098">,.</div>
  <div class="abs" style="left:148px;top:35px;font-size:6.5px;color:#4d545e;letter-spacing:-.4px">tte</div>
  <svg class="abs" style="left:157px;top:36.5px" width="7" height="5" viewBox="0 0 7 5"><path d="M.8 .8 3.5 4 6.2 .8" fill="none" stroke="#3a424d" stroke-width="1"/></svg>
  <div class="abs" style="left:0;top:51.5px;width:180px;height:1px;background:#f1f2f4"></div>
  <div class="abs" style="left:7px;top:60.5px;font-size:9.4px;font-weight:bold;color:#1f252d;letter-spacing:-.25px">Object List</div>
  <div class="abs" style="left:147px;top:63px;font-size:6.5px;color:#3d444e;letter-spacing:-.4px">ttt'</div>
  <svg class="abs" style="left:157px;top:64.5px" width="7" height="5" viewBox="0 0 7 5"><path d="M.8 .8 3.5 4 6.2 .8" fill="none" stroke="#2b323c" stroke-width="1.1"/></svg>
</div>
<!-- floating tool / colour panel -->
<div id="fp" class="abs" style="left:794px;top:57px;width:51px;height:313px;background:#fff;border-radius:3px;box-shadow:0 1px 5px rgba(50,60,75,.20)">
  <div class="abs" style="left:4px;top:4.5px;width:44px;height:17.5px;background:#2c343f;border-radius:2px;color:#f1f3f5;font-size:8.4px;font-weight:bold;text-align:center;line-height:17.5px;font-family:'Liberation Serif',serif;letter-spacing:.1px">Seint</div>
  <div class="abs" style="left:0;top:52.5px;width:51px;height:1px;background:#eceef0"></div>
  <div class="abs" style="left:0;top:84px;width:51px;height:1px;background:#eceef0"></div>
  <div class="abs" style="left:24.5px;top:84px;width:1px;height:229px;background:#f0f1f3"></div>
  <!-- rows 1,2 -->
  <svg class="abs" style="left:10.5px;top:33.5px" width="7" height="9" viewBox="0 0 7 9"><path d="M1 1h4.6M1 1v7h4.8M1 4.4h3.4M5.8 8V6" fill="none" stroke="#6d757f" stroke-width="1"/></svg>
  <svg class="abs" style="left:33px;top:35px" width="8" height="6" viewBox="0 0 8 6"><path d="M1 1 4 4.6 7 1" fill="none" stroke="#2d3540" stroke-width="1.5"/></svg>
  <svg class="abs" style="left:9.5px;top:63px" width="9" height="10" viewBox="0 0 9 10"><rect x=".8" y=".8" width="7.4" height="8.4" rx="1" fill="none" stroke="#4a525d" stroke-width="1.2"/><path d="M3 3.4h3.4M3 5.6h3.4" stroke="#4a525d" stroke-width="1"/></svg>
  <svg class="abs" style="left:34px;top:66.5px" width="7" height="5" viewBox="0 0 7 5"><path d="M.8 .8 3.5 3.8 6.2 .8" fill="none" stroke="#3d4550" stroke-width="1.1"/></svg>
  <!-- header row -->
  <div class="abs" style="left:9.5px;top:95px;font-size:9.5px;color:#666e78">6</div>
  <svg class="abs" style="left:31.5px;top:97.5px" width="7" height="7" viewBox="0 0 7 7"><path d="M.8 .8 6.2 6.2M6.2 .8 .8 6.2" stroke="#59616b" stroke-width=".9"/></svg>
  <div class="abs" style="left:0;top:113.5px;width:25px;height:1px;background:#f3f4f5"></div><div class="abs" style="left:0;top:135px;width:25px;height:1px;background:#f3f4f5"></div><div class="abs" style="left:0;top:156.5px;width:25px;height:1px;background:#f3f4f5"></div><div class="abs" style="left:0;top:178px;width:25px;height:1px;background:#f3f4f5"></div><div class="abs" style="left:0;top:199.5px;width:25px;height:1px;background:#f3f4f5"></div><div class="abs" style="left:0;top:221px;width:25px;height:1px;background:#f3f4f5"></div><div class="abs" style="left:0;top:242.5px;width:25px;height:1px;background:#f3f4f5"></div><div class="abs" style="left:0;top:264px;width:25px;height:1px;background:#f3f4f5"></div><div class="abs" style="left:0;top:286px;width:25px;height:1px;background:#f3f4f5"></div>
  <!-- colour scale -->
  <div class="abs" style="left:26.5px;top:114px;width:17px;height:172px;background:linear-gradient(#de4526 0,#e3501f 11.5%,#ee8a20 13%,#f2981c 24%,#efc914 25.5%,#f0dd18 36.5%,#a6d41f 38%,#86cc1f 49%,#16ad3b 50.5%,#10b246 61.5%,#0dbf8f 63%,#0cc4a6 74%,#14a4de 75.5%,#1590e6 86.5%,#2263d6 88%,#2454cc 100%)"></div>
  <svg class="abs" style="left:9.5px;top:120.5px" width="8" height="8" viewBox="0 0 8 8"><path d="M1 7 6 1M1 7h5V3" fill="none" stroke="#5d656f" stroke-width=".95"/></svg>
  <div class="abs" style="left:33.5px;top:122.5px;width:3px;height:3px;border-radius:1.5px;background:#fff;opacity:.92"></div>
  <svg class="abs" style="left:9.5px;top:142px" width="8" height="8" viewBox="0 0 8 8"><path d="M1 1h6L4 6.5Z" fill="none" stroke="#5d656f" stroke-width=".95"/></svg>
  <div class="abs" style="left:33.5px;top:144px;width:3px;height:3px;border-radius:1.5px;background:#fff;opacity:.92"></div>
  <svg class="abs" style="left:9.5px;top:163.5px" width="8" height="8" viewBox="0 0 8 8"><path d="M1 1h6M1 7h6M2 2 6 6M6 2 2 6" fill="none" stroke="#5d656f" stroke-width=".95"/></svg>
  <div class="abs" style="left:33.5px;top:165.5px;width:3px;height:3px;border-radius:1.5px;background:#fff;opacity:.92"></div>
  <svg class="abs" style="left:9.5px;top:185px" width="8" height="8" viewBox="0 0 8 8"><path d="M1 1h6L1 7h6Z" fill="none" stroke="#5d656f" stroke-width=".95"/></svg>
  <div class="abs" style="left:33.5px;top:187px;width:3px;height:3px;border-radius:1.5px;background:#fff;opacity:.92"></div>
  <svg class="abs" style="left:9.5px;top:206.5px" width="8" height="8" viewBox="0 0 8 8"><path d="M1 1h6v6H1ZM2.5 2.5l3 3" fill="none" stroke="#5d656f" stroke-width=".95"/></svg>
  <div class="abs" style="left:33.5px;top:208.5px;width:3px;height:3px;border-radius:1.5px;background:#fff;opacity:.92"></div>
  <svg class="abs" style="left:9.5px;top:228px" width="8" height="8" viewBox="0 0 8 8"><path d="M1 1h6v6H1ZM2 6 6 2" fill="none" stroke="#5d656f" stroke-width=".95"/></svg>
  <div class="abs" style="left:33.5px;top:230px;width:3px;height:3px;border-radius:1.5px;background:#fff;opacity:.92"></div>
  <svg class="abs" style="left:9.5px;top:249.5px" width="8" height="8" viewBox="0 0 8 8"><path d="M1 7 6 1M1 7h5.5V3" fill="none" stroke="#5d656f" stroke-width=".95"/></svg>
  <div class="abs" style="left:33.5px;top:251.5px;width:3px;height:3px;border-radius:1.5px;background:#fff;opacity:.92"></div>
  <svg class="abs" style="left:9.5px;top:271px" width="8" height="8" viewBox="0 0 8 8"><path d="M1 7V2h4M2 6 6.5 1.5M1 7h5V4" fill="none" stroke="#5d656f" stroke-width=".95"/></svg>
  <div class="abs" style="left:33.5px;top:273px;width:3px;height:3px;border-radius:1.5px;background:#fff;opacity:.92"></div>
  <svg class="abs" style="left:9.5px;top:293.5px" width="8" height="9" viewBox="0 0 8 9"><rect x=".8" y=".8" width="6.4" height="7.4" fill="none" stroke="#747b85" stroke-width="1"/><path d="M.8 3.4h6.4" stroke="#747b85" stroke-width="1"/></svg>
  <svg class="abs" style="left:31.5px;top:294.5px" width="7" height="7" viewBox="0 0 7 7"><path d="M.8 .8 6.2 6.2M6.2 .8 .8 6.2" stroke="#6a717b" stroke-width=".9"/></svg>
</div>

<!-- bottom bar -->
<div id="bottom" class="abs">
<span style="left:10px">98 gm</span><i style="left:41px;top:13.8px">▾</i>
<div class="abs" style="left:54px;top:9.8px;width:1px;height:17px;background:#eceef0"></div>
<svg class="abs" style="left:60px;top:13.3px" width="11" height="9" viewBox="0 0 11 9"><path d="M.5 4.5h10M2 4.5 5.5 1.2 9 4.5 5.5 7.8Z" fill="none" stroke="#2b313a" stroke-width="1.3"/><circle cx="5.5" cy="4.5" r="1.3" fill="#2b313a"/></svg>
<span style="left:74px">38.41 ms</span><i style="left:122px;top:13.8px">▾</i>
<div class="abs" style="left:263px;top:7.8px;width:1px;height:22px;background:#eceef0"></div>
<div class="abs" style="left:272px;top:10.8px;width:18px;height:15px;background:#2a323d;border-radius:1.5px"></div>
<svg class="abs" style="left:277px;top:14.8px" width="8" height="7" viewBox="0 0 8 7"><path d="M4 .5V6M1 3h6" stroke="#e8ebef" stroke-width="1"/><path d="M2.2 3.6 4 6 5.8 3.6Z" fill="#e8ebef"/></svg>
<span style="left:294px;letter-spacing:0">7.lthra41 mins</span><i style="left:369px;top:13.8px">▾</i>
<div class="abs" style="left:383px;top:7.8px;width:1px;height:22px;background:#f0f1f3"></div>
<svg class="abs" style="left:395px;top:11.8px" width="11" height="13" viewBox="0 0 11 13"><path d="M5.5 .6 10.2 3.4V9.4L5.5 12.4.8 9.4V3.4Z" fill="#232b36"/><path d="M5.5 4.2 7.6 6.5 5.5 8.8" fill="none" stroke="#fff" stroke-width="1.4"/></svg>
<span style="left:412px;letter-spacing:-.25px">3.0thra00 mns</span>
<svg class="abs" style="left:499px;top:16.8px" width="7" height="5" viewBox="0 0 7 5"><path d="M.8 .8 3.5 3.8 6.2 .8" fill="none" stroke="#39414b" stroke-width="1.1"/></svg>
<div class="abs" style="left:514px;top:7.8px;width:1px;height:22px;background:#f0f1f3"></div>
<svg class="abs" style="left:524px;top:12.8px" width="11" height="11" viewBox="0 0 11 11"><rect x=".8" y=".8" width="9.4" height="9.4" rx="1" fill="none" stroke="#2b333e" stroke-width="1.3"/><path d="M3.2 3.4h4.6M3.2 5.5h4.6M3.2 7.6h4.6M5.5 3v5" stroke="#2b333e" stroke-width="1"/></svg>
<span style="left:540px">Grame</span>
<svg class="abs" style="left:597px;top:16.8px" width="7" height="5" viewBox="0 0 7 5"><path d="M.8 .8 3.5 3.8 6.2 .8" fill="none" stroke="#39414b" stroke-width="1.1"/></svg>
<div class="abs" style="left:612px;top:7.8px;width:1px;height:22px;background:#f0f1f3"></div>
<svg class="abs" style="left:621px;top:11.8px" width="14" height="13" viewBox="0 0 14 13"><path d="M3 1h4M9 1h4v4M13 1 8 6M1 11.5 6 6.5M1 8v3.5h4M8.5 9.5h4v2.5h-5" fill="none" stroke="#2b333e" stroke-width="1.2"/></svg>
<span style="left:640px;font-size:9.9px;top:12.3px">Save As GCode</span>
<svg class="abs" style="left:719px;top:16.8px" width="7" height="5" viewBox="0 0 7 5"><path d="M.8 .8 3.5 3.8 6.2 .8" fill="none" stroke="#39414b" stroke-width="1.1"/></svg>
<div class="abs" style="left:734px;top:7.8px;width:1px;height:22px;background:#f0f1f3"></div>
<svg class="abs" style="left:744px;top:13.3px" width="14" height="10" viewBox="0 0 14 10"><rect x=".3" y=".3" width="13.4" height="9.4" rx="1" fill="#f5a623"/><path d="M.3 2.6h13.4M4.8 2.6v7.1" stroke="#fbd58a" stroke-width=".9"/><rect x="6.2" y="4.4" width="6" height="3.6" fill="#f7bd55"/></svg>
<span style="left:763px">Send to Printer</span>
<svg class="abs" style="left:847px;top:16.8px" width="7" height="5" viewBox="0 0 7 5"><path d="M.8 .8 3.5 3.8 6.2 .8" fill="none" stroke="#39414b" stroke-width="1.1"/></svg>
<div class="abs" style="left:873px;top:1.8px;width:141px;height:26px;background:#272f3a;border-radius:2.5px;box-shadow:0 1px 4px rgba(30,35,45,.35);color:#e3e6ea;font-size:10px;text-align:center;line-height:26px;letter-spacing:.1px">Seme to Phonde</div>

</div>
</body>
</html>
